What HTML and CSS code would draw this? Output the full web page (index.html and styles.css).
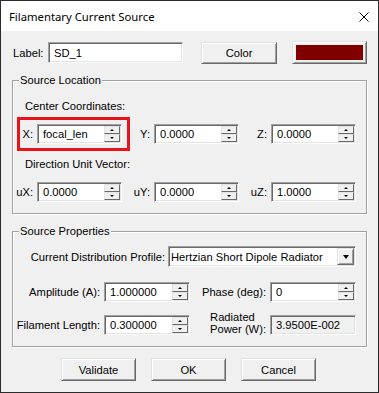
FILE: index.html
```html
<!DOCTYPE html>
<html lang="en">
  <head>
    <meta charset="UTF-8">
    <meta name="viewport" content="width=device-width, initial-scale=1.0">
    <title>Filamentary Current Source</title>
    <link rel="stylesheet" href="styles.css">
  </head>
  <body>
    <div class="dialog">
      <div class="titlebar">
        <span class="title">Filamentary Current Source</span>
        <svg class="close" width="10" height="10" viewBox="0 0 10 10">
          <path d="M0.5 0.5 L9.5 9.5 M9.5 0.5 L0.5 9.5" stroke="#000" stroke-width="1" fill="none"/>
        </svg>
      </div>
      <div class="content">
        <div class="top-row">
          <span class="field-label">Label:</span>
          <div class="edit label-edit"><span class="value">SD_1</span></div>
          <div class="btn color-btn">Color</div>
          <div class="btn swatch"><div class="swatch-fill"></div></div>
        </div>

        <div class="group location">
          <span class="group-title">Source Location</span>
          <div class="caption">Center Coordinates:</div>
          <div class="coord-row first">
            <div class="cell highlight">
              <span>X:</span>
              <div class="edit spin-edit">
                <span class="value">focal_len</span>
                <div class="spinner"><div class="spin-btn"><i class="arrow-up"></i></div><div class="spin-btn"><i class="arrow-down"></i></div></div>
              </div>
            </div>
            <div class="cell narrow">
              <span>Y:</span>
              <div class="edit spin-edit">
                <span class="value">0.0000</span>
                <div class="spinner"><div class="spin-btn"><i class="arrow-up"></i></div><div class="spin-btn"><i class="arrow-down"></i></div></div>
              </div>
            </div>
            <div class="cell wide">
              <span>Z:</span>
              <div class="edit spin-edit">
                <span class="value">0.0000</span>
                <div class="spinner"><div class="spin-btn"><i class="arrow-up"></i></div><div class="spin-btn"><i class="arrow-down"></i></div></div>
              </div>
            </div>
          </div>
          <div class="caption second">Direction Unit Vector:</div>
          <div class="coord-row">
            <div class="cell narrow">
              <span>uX:</span>
              <div class="edit spin-edit">
                <span class="value">0.0000</span>
                <div class="spinner"><div class="spin-btn"><i class="arrow-up"></i></div><div class="spin-btn"><i class="arrow-down"></i></div></div>
              </div>
            </div>
            <div class="cell wide">
              <span>uY:</span>
              <div class="edit spin-edit">
                <span class="value">0.0000</span>
                <div class="spinner"><div class="spin-btn"><i class="arrow-up"></i></div><div class="spin-btn"><i class="arrow-down"></i></div></div>
              </div>
            </div>
            <div class="cell wide">
              <span>uZ:</span>
              <div class="edit spin-edit">
                <span class="value">1.0000</span>
                <div class="spinner"><div class="spin-btn"><i class="arrow-up"></i></div><div class="spin-btn"><i class="arrow-down"></i></div></div>
              </div>
            </div>
          </div>
        </div>

        <div class="group properties">
          <span class="group-title">Source Properties</span>
          <div class="combo-row">
            <span>Current Distribution Profile:</span>
            <div class="edit combo">
              <span class="value">Hertzian Short Dipole Radiator</span>
              <div class="btn drop-btn"><i class="arrow-drop"></i></div>
            </div>
          </div>
          <div class="prop-row amp-row">
            <div class="prop-cell left">
              <span>Amplitude (A):</span>
              <div class="edit spin-edit">
                <span class="value">1.000000</span>
                <div class="spinner"><div class="spin-btn"><i class="arrow-up"></i></div><div class="spin-btn"><i class="arrow-down"></i></div></div>
              </div>
            </div>
            <div class="prop-cell right">
              <span>Phase (deg):</span>
              <div class="edit spin-edit">
                <span class="value">0</span>
                <div class="spinner"><div class="spin-btn"><i class="arrow-up"></i></div><div class="spin-btn"><i class="arrow-down"></i></div></div>
              </div>
            </div>
          </div>
          <div class="prop-row len-row">
            <div class="prop-cell left">
              <span>Filament Length:</span>
              <div class="edit spin-edit">
                <span class="value">0.300000</span>
                <div class="spinner"><div class="spin-btn"><i class="arrow-up"></i></div><div class="spin-btn"><i class="arrow-down"></i></div></div>
              </div>
            </div>
            <div class="prop-cell right">
              <span class="two-line">Radiated<br>Power (W):</span>
              <div class="edit readonly"><span class="value">3.9500E-002</span></div>
            </div>
          </div>
        </div>

        <div class="buttons">
          <div class="btn">Validate</div>
          <div class="btn">OK</div>
          <div class="btn">Cancel</div>
        </div>
      </div>
    </div>
  </body>
</html>
```

FILE: styles.css
```css
:root {
  --face: #f0f0f0;
  --light: #e3e3e3;
  --shadow: #a0a0a0;
  --dark-shadow: #696969;
  --mark: #e8141c;
}

body {
  margin: 0;
  font-family: "Liberation Sans", Arial, sans-serif;
  font-size: 11.2px;
  color: #000;
}

.dialog {
  width: 379px;
  height: 393px;
  box-sizing: border-box;
  border: 1px solid #2b2b2b;
  background-color: var(--face);
}

.titlebar {
  height: 30px;
  background-color: #fff;
  display: flex;
  align-items: center;
  justify-content: space-between;
  padding: 0 9px 0 8px;
}

.title {
  font-family: "Noto Sans", sans-serif;
  font-size: 11.3px;
  margin-top: 1px;
}

.close {
  margin-top: 1px;
}

.content {
  padding: 11px 0 0 11px;
}

/* sunken 3d edit */
.edit {
  box-sizing: border-box;
  height: 20px;
  display: flex;
  align-items: center;
  background-color: #fff;
  border: 1px solid;
  border-color: var(--shadow) #fff #fff var(--shadow);
  box-shadow: inset 1px 1px 0 var(--dark-shadow), inset -1px -1px 0 var(--light);
  padding: 1px;
}

.edit .value {
  flex: 1;
  padding-left: 4px;
  white-space: nowrap;
  overflow: hidden;
}

/* raised 3d button */
.btn {
  box-sizing: border-box;
  display: flex;
  align-items: center;
  justify-content: center;
  background-color: var(--face);
  border: 1px solid;
  border-color: var(--light) var(--dark-shadow) var(--dark-shadow) var(--light);
  box-shadow: inset 1px 1px 0 #fff, inset -1px -1px 0 var(--shadow);
}

.top-row {
  display: flex;
  align-items: center;
  height: 21px;
}

.field-label {
  width: 35px;
  padding-left: 1px;
}

.label-edit {
  width: 135px;
  height: 21px;
}

.color-btn {
  margin-left: 18px;
  width: 76px;
  height: 22px;
}

.swatch {
  margin-left: 15px;
  width: 75px;
  height: 23px;
  padding: 3px;
}

.swatch-fill {
  width: 100%;
  height: 100%;
  background-color: #800000;
}

/* etched group box */
.group {
  position: relative;
  box-sizing: border-box;
  width: 355px;
  border: 1px solid var(--shadow);
  box-shadow: inset 1px 1px 0 #fff, 1px 1px 0 #fff;
}

.group-title {
  position: absolute;
  top: -7px;
  left: 6px;
  padding: 0 1px;
  line-height: 13px;
  background-color: var(--face);
}

.location {
  margin-top: 17px;
  height: 134px;
}

.properties {
  margin-top: 17px;
  height: 116px;
}

.caption {
  margin: 19px 0 0 12px;
  line-height: 13px;
}

.caption.second {
  margin-top: 7px;
}

.coord-row {
  display: flex;
  height: 20px;
  margin-top: 11px;
}

.coord-row.first {
  height: 34px;
  margin-top: 4px;
}

.cell {
  box-sizing: border-box;
  display: flex;
  align-items: center;
  justify-content: flex-end;
  gap: 4px;
}

.cell .edit {
  width: 85px;
}

.cell.highlight {
  margin-left: 4px;
  width: 113px;
  border: 3px solid var(--mark);
  padding-right: 5px;
}

.cell.narrow {
  width: 109px;
}

.cell.wide {
  width: 117px;
}

.spinner {
  align-self: stretch;
  width: 16px;
  display: flex;
  flex-direction: column;
}

.spin-btn {
  flex: 1;
  display: flex;
  align-items: center;
  justify-content: center;
  background-color: var(--face);
  border: 1px solid;
  border-color: var(--light) var(--dark-shadow) var(--dark-shadow) var(--light);
}

.arrow-up,
.arrow-down {
  width: 0;
  height: 0;
  border-left: 2px solid transparent;
  border-right: 2px solid transparent;
}

.arrow-up {
  border-bottom: 2px solid #000;
}

.arrow-down {
  border-top: 2px solid #000;
}

.combo-row {
  display: flex;
  align-items: center;
  justify-content: flex-end;
  gap: 3px;
  width: 343px;
  height: 21px;
  margin-top: 14px;
}

.combo {
  width: 188px;
  height: 21px;
}

.combo .value {
  padding-left: 1px;
}

.drop-btn {
  align-self: stretch;
  width: 17px;
}

.arrow-drop {
  width: 0;
  height: 0;
  border-left: 3px solid transparent;
  border-right: 3px solid transparent;
  border-top: 4px solid #000;
  margin-left: 1px;
}

.prop-row {
  display: flex;
  height: 20px;
}

.amp-row {
  margin-top: 15px;
}

.len-row {
  margin-top: 13px;
}

.prop-cell {
  display: flex;
  align-items: center;
  justify-content: flex-end;
  gap: 4px;
}

.prop-cell.left {
  width: 177px;
}

.prop-cell.right {
  width: 166px;
}

.prop-cell .edit {
  width: 86px;
}

.two-line {
  line-height: 12px;
  margin-top: -4px;
}

.readonly {
  background-color: var(--face);
}

.readonly .value {
  padding-left: 4px;
}

.buttons {
  display: flex;
  gap: 15px;
  margin: 11px 0 0 49px;
}

.buttons .btn {
  width: 75px;
  height: 23px;
}
```
